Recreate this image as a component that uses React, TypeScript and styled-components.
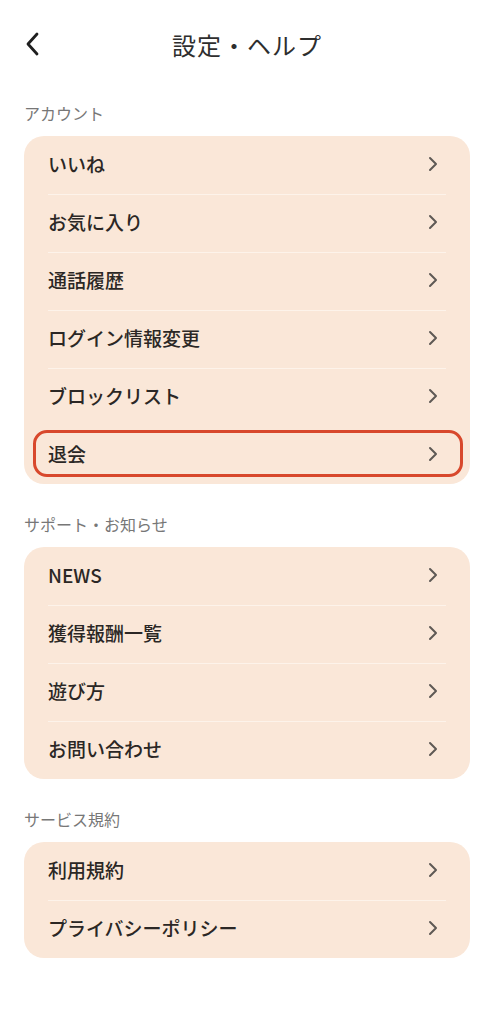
import styled, { createGlobalStyle } from 'styled-components';

const GlobalStyle = createGlobalStyle`
  body {
    margin: 0;
    background: #ffffff;
    font-family: "Noto Sans CJK JP", "Noto Sans", sans-serif;
    color: #2b2725;
  }
`;

const Page = styled.div`
  width: 494px;
  padding: 0 24px 40px;
  box-sizing: border-box;
`;

const Header = styled.header`
  position: relative;
  height: 88px;
  display: flex;
  align-items: center;
  justify-content: center;
`;

const BackButton = styled.button`
  position: absolute;
  left: 0;
  top: 31px;
  width: 24px;
  height: 26px;
  padding: 0;
  border: none;
  background: none;
  display: flex;
  align-items: center;
`;

const Title = styled.h1`
  margin: 0;
  font-size: 24px;
  font-weight: 400;
  letter-spacing: 1px;
  color: #2e2e2e;
`;

const SectionLabel = styled.div<{ $first?: boolean }>`
  margin: ${(p) => (p.$first ? '15px' : '30px')} 0 13px;
  font-size: 16px;
  line-height: 20px;
  color: #777;
`;

const Card = styled.div`
  background: #fae7d8;
  border-radius: 20px;
  overflow: hidden;
`;

const Row = styled.div<{ $highlight?: boolean }>`
  position: relative;
  box-sizing: border-box;
  height: 58px;
  padding: 0 32px 3px 24px;
  display: flex;
  align-items: center;
  justify-content: space-between;
  font-size: 19px;
  font-weight: 500;
  color: #2b2725;

  & + &::before {
    content: '';
    position: absolute;
    top: 0;
    left: 24px;
    right: 24px;
    height: 1px;
    background: #fdf3ea;
  }

  ${(p) =>
    p.$highlight &&
    `
    &::after {
      content: '';
      position: absolute;
      top: 4px;
      left: 9px;
      right: 7px;
      bottom: 7px;
      border: 3px solid #d8482c;
      border-radius: 14px;
    }
  `}
`;

const Chevron = () => (
  <svg width="10" height="16" viewBox="0 0 10 16">
    <path d="M2 2 L8 8 L2 14" fill="none" stroke="#5e5955" strokeWidth="2" strokeLinecap="round" strokeLinejoin="round" />
  </svg>
);

const sections = [
  {
    label: 'アカウント',
    items: ['いいね', 'お気に入り', '通話履歴', 'ログイン情報変更', 'ブロックリスト', '退会'],
  },
  {
    label: 'サポート・お知らせ',
    items: ['NEWS', '獲得報酬一覧', '遊び方', 'お問い合わせ'],
  },
  {
    label: 'サービス規約',
    items: ['利用規約', 'プライバシーポリシー'],
  },
];

export default function App() {
  return (
    <Page>
      <GlobalStyle />
      <Header>
        <BackButton aria-label="戻る">
          <svg width="16" height="24" viewBox="0 0 16 24">
            <path d="M13 2 L4 12 L13 22" fill="none" stroke="#1f1f1f" strokeWidth="2.8" strokeLinecap="round" strokeLinejoin="round" />
          </svg>
        </BackButton>
        <Title>設定・ヘルプ</Title>
      </Header>
      {sections.map((s, i) => (
        <section key={s.label}>
          <SectionLabel $first={i === 0}>{s.label}</SectionLabel>
          <Card>
            {s.items.map((item) => (
              <Row key={item} $highlight={item === '退会'}>
                <span>{item}</span>
                <Chevron />
              </Row>
            ))}
          </Card>
        </section>
      ))}
    </Page>
  );
}
